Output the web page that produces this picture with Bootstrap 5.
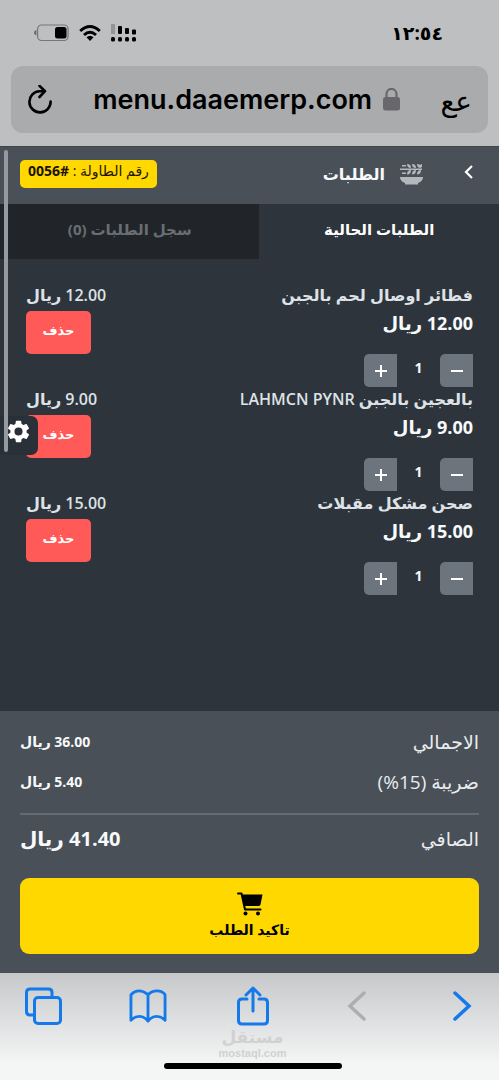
<!DOCTYPE html>
<html lang="ar" dir="rtl">
<head>
<meta charset="utf-8">
<meta name="viewport" content="width=device-width, initial-scale=1">
<title>الطلبات</title>
<link rel="stylesheet" href="https://cdn.jsdelivr.net/npm/bootstrap@5.3.0/dist/css/bootstrap.min.css">
<style>
  body { font-family: "Open Sans", "DejaVu Sans", sans-serif; background: #2d343c; color: #f8f9fa; font-size: 14px; line-height: 20px; }
  svg { display: block; flex: none; }
  .chrome-top { background: #bdbfc0; color: #000; padding: 12px 11px 13px; }
  .status { height: 42px; padding: 0 45px 0 23px; margin-bottom: 12px; }
  .clock { font-size: 19px; font-weight: 700; line-height: 42px; }
  .status-icons { gap: 10px; }
  .address { background: #a9abad; border-radius: 12px; height: 67px; padding: 0 16px; }
  .host { font-family: Inter, sans-serif; font-weight: 600; font-size: 27px; line-height: 40px; color: #000; }
  .host-group { gap: 11px; }
  .icon-btn { background: none; border: 0; padding: 0; color: inherit; }
  .icon-btn.reader { font-size: 28px; line-height: 32px; color: #000; }
  .bar { background: #495057; height: 58px; padding: 0 20px 4px; border-top: 1px solid #3f454b; }
  .bar h1 { font-size: 16px; line-height: 24px; font-weight: 700; margin: 0 15px 0 0; }
  .bowl { margin-right: 35px; }
  .table-no { background: #ffd800; color: #1b1500; border-radius: 5px; height: 28px; line-height: 22px; padding: 0 8px; font-size: 14px; }
  .tab-btn { border: 0; height: 55px; background: #212529; color: #696e73; font-weight: 700; font-size: 15px; padding: 0 0 6px; flex: 1 1 50%; }
  .tab-btn.current { background: #2d343c; color: #fff; flex-basis: 48%; flex-grow: 0; }
  .orders { padding: 25px 26px 0; }
  .order { height: 104px; }
  .dish { color: #dee2e6; font-weight: 600; font-size: 16px; line-height: 22px; }
  .cost { font-weight: 700; font-size: 18px; line-height: 34px; }
  .del { background: #ff5a57; color: #fff; border: 0; border-radius: 5px; width: 65px; height: 43px; font-size: 13px; font-weight: 600; padding: 0 0 6px; margin-top: 5px; }
  .step { background: #6c757d; color: #fff; border: 0; width: 33px; height: 33px; border-radius: 5px 0 0 5px; padding: 0; display: grid; place-items: center; }
  .stepper { margin-top: 14px; }
  .qty { width: 43px; text-align: center; font-size: 14px; font-weight: 700; line-height: 28px; }
  .totals { background: #495057; padding: 11px 20px 19px; }
  .sum-label { font-size: 19px; line-height: 40px; color: #e9ecef; }
  .sum-value { font-size: 14px; font-weight: 700; line-height: 40px; }
  .net { border-top: 2px solid #646b72; margin-top: 11px; padding-top: 4px; }
  .net .sum-value { font-size: 20px; }
  .confirm { background: #ffd800; color: #000; border: 0; border-radius: 9px; height: 76px; margin-top: 19px; font-weight: 700; font-size: 14px; gap: 4px; }
  .chrome-bottom { height: 107px; padding: 12px 18px 11px 24px; background: linear-gradient(#c6c8ca, #f4f5f5 85%); color: #1479ea; }
  .chrome-bottom .icon-btn { width: 38px; display: grid; place-items: center; }
  .watermark { color: #d0d1d1; font-weight: 700; }
  .watermark-name { font-size: 17px; line-height: 20px; }
  .watermark-site { font-family: "Liberation Sans", sans-serif; font-size: 11px; line-height: 12px; }
  .home { width: 178px; height: 6px; border-radius: 3px; background: #000; }
  .thumb { position: absolute; left: 4px; top: 4px; width: 4px; height: 302px; border-radius: 2px; background: #949a9f; z-index: 3; }
  .gear { position: absolute; left: 0; top: 270px; width: 38px; height: 39px; border-radius: 0 7px 7px 0; background: #2a3038; color: #fff; z-index: 2; }
  .gear svg { width: 27px; height: 27px; margin: -9px 6px 0 0; }
</style>
</head>
<body>
<div class="min-vh-100 d-flex flex-column">
  <header class="chrome-top" dir="ltr">
    <div class="status d-flex align-items-center justify-content-between">
      <div class="status-icons d-flex align-items-center">
        <svg width="35" height="18" viewBox="0 0 35 18"><rect x="3.6" y="1" width="30.5" height="15.5" rx="4" fill="none" stroke="#777" stroke-width="1.2"/><path d="M2.4 6v5.500Q0 10.500 0 8.700T2.400 6z" fill="#666"/><rect x="21" y="3" width="11.500" height="11.500" rx="2.500"/></svg>
        <svg width="22" height="18" viewBox="0 0 22 18" fill="none" stroke="#000" stroke-width="2.900"><path d="M1.200 7Q11-2.200 20.800 7M5 11Q11 5.400 17 11"/><path d="M7.500 13.300Q11 10.300 14.500 13.300L11 17z" fill="#000" stroke="none"/></svg>
        <svg width="26" height="18" viewBox="0 0 26 18"><rect width="4" height="10" fill="#929495"/><rect x="7" y="2" width="4" height="8" rx="1"/><rect x="14" y="4" width="4" height="6" rx="1"/><rect x="21" y="5.500" width="4" height="5" rx="1"/><rect y="13" width="4" height="4.500" rx="1.500"/><rect x="7" y="13" width="4" height="4.500" rx="1.500"/><rect x="14" y="13" width="4" height="4.500" rx="1.500"/><rect x="21" y="13" width="4" height="4.500" rx="1.500"/></svg>
      </div>
      <span class="clock">١٢:٥٤</span>
    </div>
    <div class="address d-flex align-items-center justify-content-between">
      <button class="icon-btn" aria-label="تحديث"><svg width="26" height="30" viewBox="0 0 26 30" fill="none" stroke="#000" stroke-width="2.600" stroke-linecap="round" stroke-linejoin="round"><path d="M17 6.200H12.500A10.600 10.600 0 1 0 23.600 16.500M12.500 0.800L18 6.200L12.500 12"/></svg></button>
      <div class="host-group d-flex align-items-center"><span class="host">menu.daaemerp.com</span>
        <svg width="17" height="24" viewBox="0 0 17 24"><rect y="9" width="17" height="13.500" rx="2.500" fill="#68686c"/><path d="M3.500 10V6a5 5 0 0 1 10 0V10" fill="none" stroke="#68686c" stroke-width="2.200"/></svg></div>
      <button class="icon-btn reader">عع</button>
    </div>
  </header>

  <main class="flex-grow-1 d-flex flex-column position-relative">
    <div class="bar d-flex align-items-center justify-content-between">
      <div class="d-flex align-items-center">
        <button class="icon-btn" aria-label="رجوع"><svg width="20" height="20" viewBox="0 0 20 20" fill="none" stroke="#fff" stroke-width="2.200"><path d="M13 2L7 8L13 14"/></svg></button>
        <svg class="bowl" width="24" height="22" viewBox="0 0 24 22" fill="#b3b8bc"><path d="M0 14h23q0 4-5 6v1.500H5V20q-5-2-5-6zM0 5.500h7v1.500H0zM2 2h4v1.500H2zM2 9.500h4V11H2z"/><path d="M7 1q4 0 4 4-4 0-4-4zM12 1q4 0 4 4-4 0-4-4zM17 1q4 0 4 4-4 0-4-4zM7 11.500q0-4.500 4-4.500 0 4.500-4 4.500zM12 11.500q0-4.500 4-4.500 0 4.500-4 4.500zM17 11.500q0-4.500 4-4.500 0 4.500-4 4.500zM20 3q0-2 2-2v3.500zM7 5.500h15V7H7z"/></svg>
        <h1>الطلبات</h1>
      </div>
      <div class="table-no">رقم الطاولة : <b>#0056</b></div>
    </div>
    <div class="d-flex">
      <button class="tab-btn current">الطلبات الحالية</button>
      <button class="tab-btn">سجل الطلبات (0)</button>
    </div>

    <section class="orders flex-grow-1">
      <article class="order d-flex justify-content-between">
        <div>
          <div class="dish">فطائر اوصال لحم بالجبن</div>
          <div class="cost">12.00 ريال</div>
          <div class="stepper d-flex"><button class="step" aria-label="إنقاص"><svg width="14" height="14" stroke="#fff" stroke-width="2"><path d="M1 7H13"/></svg></button><span class="qty">1</span><button class="step" aria-label="زيادة"><svg width="14" height="14" stroke="#fff" stroke-width="2"><path d="M1 7H13M7 1V13"/></svg></button></div>
        </div>
        <div class="d-flex flex-column align-items-end"><span class="dish">12.00 ريال</span><button class="del">حذف</button></div>
      </article>
      <article class="order d-flex justify-content-between">
        <div>
          <div class="dish">بالعجين بالجبن LAHMCN PYNR</div>
          <div class="cost">9.00 ريال</div>
          <div class="stepper d-flex"><button class="step" aria-label="إنقاص"><svg width="14" height="14" stroke="#fff" stroke-width="2"><path d="M1 7H13"/></svg></button><span class="qty">1</span><button class="step" aria-label="زيادة"><svg width="14" height="14" stroke="#fff" stroke-width="2"><path d="M1 7H13M7 1V13"/></svg></button></div>
        </div>
        <div class="d-flex flex-column align-items-end"><span class="dish">9.00 ريال</span><button class="del">حذف</button></div>
      </article>
      <article class="order d-flex justify-content-between">
        <div>
          <div class="dish">صحن مشكل مقبلات</div>
          <div class="cost">15.00 ريال</div>
          <div class="stepper d-flex"><button class="step" aria-label="إنقاص"><svg width="14" height="14" stroke="#fff" stroke-width="2"><path d="M1 7H13"/></svg></button><span class="qty">1</span><button class="step" aria-label="زيادة"><svg width="14" height="14" stroke="#fff" stroke-width="2"><path d="M1 7H13M7 1V13"/></svg></button></div>
        </div>
        <div class="d-flex flex-column align-items-end"><span class="dish">15.00 ريال</span><button class="del">حذف</button></div>
      </article>
    </section>

    <section class="totals">
      <div class="d-flex justify-content-between"><span class="sum-label">الاجمالي</span><span class="sum-value">36.00 ريال</span></div>
      <div class="d-flex justify-content-between"><span class="sum-label">ضريبة (15%)</span><span class="sum-value">5.40 ريال</span></div>
      <div class="net d-flex justify-content-between"><span class="sum-label">الصافي</span><span class="sum-value">41.40 ريال</span></div>
      <button class="confirm w-100 d-flex flex-column align-items-center justify-content-center">
        <svg width="26" height="24" viewBox="0 0 26 24"><path d="M1 1.500H4.500L8 17.500H23.500" fill="none" stroke="#000" stroke-width="2" stroke-linecap="round" stroke-linejoin="round"/><path d="M5 2.500H25.500L23.500 12.500Q23 14 21.500 14H7.500z"/><circle cx="8.500" cy="21.500" r="2"/><circle cx="21" cy="21.500" r="2"/></svg>
        <span>تاكيد الطلب</span>
      </button>
    </section>
    <div class="thumb"></div>
    <button class="icon-btn gear" aria-label="الإعدادات"><svg viewBox="0 0 24 24" fill="#fff"><path d="M19.140 12.940c.04-.3.060-.61.060-.94s-.02-.64-.07-.94l2.030-1.580a.49.490 0 0 0 .12-.61l-1.920-3.320a.49.490 0 0 0-.59-.22l-2.390.96a7 7 0 0 0-1.620-.94l-.36-2.540A.48.480 0 0 0 13.920 2.400h-3.840a.48.480 0 0 0-.47.410l-.36 2.540a7 7 0 0 0-1.620.94l-2.390-.96a.49.490 0 0 0-.59.220L2.740 8.870a.48.480 0 0 0 .12.610l2.030 1.580a6 6 0 0 0 0 1.880l-2.030 1.580a.49.490 0 0 0-.12.610l1.920 3.320c.12.220.37.290.59.220l2.390-.96c.5.380 1.030.7 1.620.94l.36 2.540c.05.240.24.410.48.410h3.840c.24 0 .44-.17.470-.41l.36-2.540a7 7 0 0 0 1.620-.94l2.390.96c.22.080.47 0 .59-.22l1.920-3.320a.48.480 0 0 0-.12-.61zM12 15.600a3.600 3.600 0 1 1 0-7.200 3.600 3.600 0 0 1 0 7.200z"/></svg></button>
  </main>

  <footer class="chrome-bottom d-flex flex-column align-items-center" dir="ltr">
    <nav class="d-flex align-items-center justify-content-between w-100">
      <button class="icon-btn" aria-label="علامات التبويب"><svg width="38" height="38" viewBox="0 0 38 38" fill="none" stroke="currentColor" stroke-width="3"><path d="M10 28H6Q2.500 28 2.500 24.500V5.500Q2.500 2 6 2H24.500Q28 2 28 5.500V10"/><rect x="10.500" y="10.500" width="26" height="26" rx="3.500"/></svg></button>
      <button class="icon-btn" aria-label="الإشارات"><svg width="38" height="36" viewBox="0 0 40 38" fill="none" stroke="currentColor" stroke-width="3" stroke-linejoin="round"><path d="M20 7Q15 3 10.500 3T2 7V34Q6 30 11 30T20 35Q24 30 29 30T38 34V7Q35 3 29.500 3T20 7V35"/></svg></button>
      <button class="icon-btn" aria-label="مشاركة"><svg width="34" height="42" viewBox="0 0 34 42" fill="none" stroke="currentColor" stroke-width="3" stroke-linejoin="round" stroke-linecap="round"><path d="M11 14H6Q2.500 14 2.500 17.500V35.500Q2.500 39 6 39H28Q31.500 39 31.500 35.500V17.500Q31.500 14 28 14H23M17 26V3M10 10L17 3L24 10"/></svg></button>
      <button class="icon-btn" aria-label="السابق"><svg width="20" height="32" viewBox="0 0 20 32" fill="none" stroke="#adaeaf" stroke-width="3.500" stroke-linecap="round"><path d="M17 3L3 16L17 29"/></svg></button>
      <button class="icon-btn" aria-label="التالي"><svg width="20" height="32" viewBox="0 0 20 32" fill="none" stroke="currentColor" stroke-width="3.500" stroke-linecap="round"><path d="M3 3L17 16L3 29"/></svg></button>
    </nav>
    <div class="watermark text-center"><div class="watermark-name">مستقل</div><div class="watermark-site">mostaql.com</div></div>
    <div class="home mt-auto"></div>
  </footer>
</div>
<script src="https://cdn.jsdelivr.net/npm/bootstrap@5.3.0/dist/js/bootstrap.bundle.min.js"></script>
</body>
</html>
